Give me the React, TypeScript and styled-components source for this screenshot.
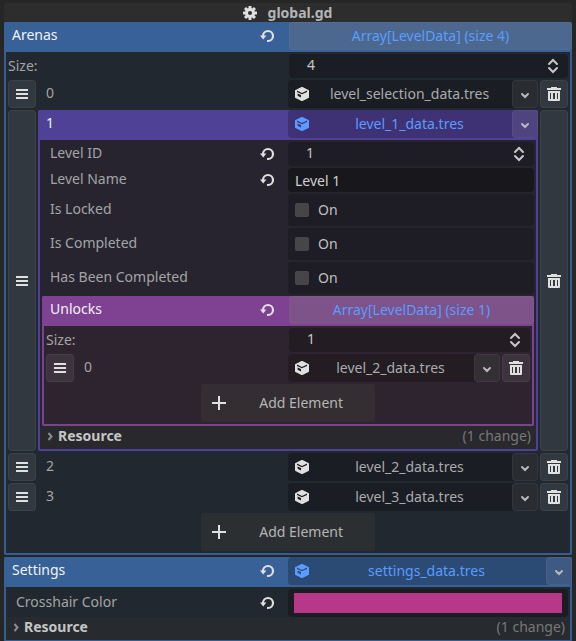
import React, { useState } from "react";
import styled, { createGlobalStyle } from "styled-components";

const GlobalStyle = createGlobalStyle`
  *, *::before, *::after { box-sizing: border-box; }
  body {
    margin: 0;
    background: #262626;
    color: #a2a4a6;
    font: 14px/20px "Noto Sans", sans-serif;
  }
  button, input { font: inherit; color: inherit; margin: 0; }
  button { border: 0; padding: 0; background: none; cursor: pointer; }
`;

const Inspector = styled.main`
  display: flex;
  flex-direction: column;
  padding: 3px 4px 0;
`;

const Title = styled.h1`
  display: flex;
  align-items: center;
  justify-content: center;
  gap: 10px;
  height: 19px;
  margin: 0;
  padding-right: 2px;
  border-radius: 3px 3px 0 0;
  background: #2d2d2d;
  color: #b4b5b6;
  font-size: 14px;
  line-height: 18px;
`;

const Section = styled.section<{ $edge: string; $fill: string }>`
  border: 2px solid ${(p) => p.$edge};
  border-top: 0;
  border-radius: 2px;
  background: ${(p) => p.$fill};
  min-width: 0;

  & + & { margin-top: 2px; }
`;

const SectionHeader = styled.header<{ $fill: string }>`
  display: grid;
  grid-template-columns: 1fr 1fr;
  height: 30px;
  margin: 0 -2px;
  padding-bottom: 2px;
  border-radius: 2px 2px 0 0;
  background: ${(p) => p.$fill};
  color: #f0f2f5;
`;

const Body = styled.div<{ $flush?: boolean }>`
  display: flex;
  flex-direction: column;
  gap: 2px;
  padding: 2px 2px ${(p) => (p.$flush ? 0 : 2)}px;
`;

const PropertyRow = styled.div<{ $height: number }>`
  display: grid;
  grid-template-columns: 1fr 1fr;
  height: ${(p) => p.$height}px;
`;

const LabelCell = styled.div<{ $plain?: boolean }>`
  display: flex;
  align-items: center;
  justify-content: space-between;
  min-width: 0;
  padding: ${(p) => (p.$plain ? "0" : "0 13px 2px 8px")};
  white-space: nowrap;
`;

const RevertButton = styled.button`
  display: flex;
  margin-top: 2px;
  color: #e0e0e0;
`;

const ArrayButton = styled.button`
  margin-left: 1px;
  border: 1px solid rgba(255, 255, 255, 0.03);
  border-radius: 4px;
  background: rgba(120, 120, 120, 0.32);
  color: #5a9cff;
`;

const Field = styled.div<{ $inset?: boolean; $fill: string }>`
  display: flex;
  align-items: center;
  min-width: 0;
  margin-left: ${(p) => (p.$inset ? 1 : 0)}px;
  border-radius: 4px;
  background: ${(p) => p.$fill};
  color: #c6c7c9;
`;

const NumberInput = styled.input`
  flex: 1;
  min-width: 0;
  height: 24px;
  padding: 0 0 4px 18px;
  border: 0;
  outline: 0;
  background: none;
  appearance: textfield;
  &::-webkit-inner-spin-button { display: none; }
`;

const Stepper = styled.button`
  display: flex;
  margin-right: 7px;
  color: #c6c7c9;
`;

const TextInput = styled.input`
  width: 100%;
  min-width: 0;
  height: 24px;
  padding: 0 7px;
  border: 0;
  border-radius: 4px;
  outline: 0;
  background: #18171c;
  color: #d0d0d2;
`;

const CheckLabel = styled.label`
  display: flex;
  align-items: center;
  gap: 9px;
  min-width: 0;
  padding-left: 7px;
  border-radius: 4px;
  background: #1e1c24;
  color: #c0c0c2;
`;

const CheckBox = styled.input`
  appearance: none;
  width: 14px;
  height: 14px;
  border-radius: 2px;
  background: #46454a;
  &:checked { background: #5a9cff; }
`;

const ResourceField = styled.div<{ $fill: string; $ink?: string }>`
  display: flex;
  min-width: 0;
  height: 28px;
  border-radius: 4px;
  background: ${(p) => p.$fill};
  color: ${(p) => p.$ink ?? "#e0e0e0"};
`;

const ResourceButton = styled.button`
  display: flex;
  flex: 1;
  align-items: center;
  min-width: 0;
  padding: 0 3px 0 6px;
`;

const ResourceName = styled.span<{ $ink?: string }>`
  flex: 1;
  overflow: hidden;
  color: ${(p) => p.$ink ?? "#a9abad"};
  text-align: center;
  text-overflow: ellipsis;
  white-space: nowrap;
`;

const Tile = styled.button<{ $fill: string; $width?: number }>`
  display: flex;
  flex: none;
  align-items: center;
  justify-content: center;
  width: ${(p) => p.$width ?? 28}px;
  border: 1px solid rgba(255, 255, 255, 0.05);
  border-radius: 4px;
  background: ${(p) => p.$fill};
  color: #e0e0e0;
`;

const ItemRow = styled.div`
  display: grid;
  grid-template-columns: 28px minmax(0, 1fr) 28px;
  gap: 2px;
  min-height: 28px;
`;

const ItemContent = styled.div`
  display: grid;
  grid-template-columns: 1fr 1fr;
  min-width: 0;
`;

const AddButton = styled.button<{ $fill: string }>`
  display: flex;
  align-items: center;
  align-self: center;
  justify-content: space-between;
  width: 174px;
  height: 38px;
  padding: 0 32px 0 10px;
  border-radius: 2px;
  background: ${(p) => p.$fill};
  color: #b4b5b6;
`;

const CategoryRow = styled.button<{ $fill: string }>`
  display: flex;
  align-items: center;
  width: 100%;
  height: 23px;
  padding: 0 5px 4px 6px;
  background: ${(p) => p.$fill};
  white-space: nowrap;
`;

const CategoryName = styled.strong`
  flex: 1;
  margin-left: 2px;
  color: #c4c5c6;
  text-align: left;
`;

const ChangeCount = styled.span`
  color: #77787a;
`;

const ColorButton = styled.button<{ $color: string }>`
  height: 28px;
  border: solid #1b1d23;
  border-width: 4px 6px;
  border-radius: 4px;
  background: ${(p) => p.$color};
`;

const Icon = styled.svg`
  display: block;
  flex: none;
`;

const GearIcon = () => (
  <Icon width="16" height="16" viewBox="0 0 16 16" aria-hidden="true">
    <g fill="#e0e0e0">
      {[0, 45, 90, 135].map((a) => (
        <rect key={a} x="6.5" y="1" width="3" height="14" rx="0.5" transform={`rotate(${a} 8 8)`} />
      ))}
      <circle cx="8" cy="8" r="5" />
    </g>
    <circle cx="8" cy="8" r="2" fill="#2d2d2d" />
  </Icon>
);

const RevertIcon = () => (
  <Icon width="16" height="16" viewBox="0 0 16 16" aria-hidden="true">
    <path
      d="M4 8.5V8a5 5 0 1 1 5 5H8"
      fill="none"
      stroke="currentColor"
      strokeWidth="2.2"
    />
    <path fill="currentColor" d="M1 7.6h6.4L4.2 11.4z" />
  </Icon>
);

const CubeIcon = () => (
  <Icon width="16" height="16" viewBox="0 0 16 16" aria-hidden="true">
    <path
      fill="currentColor"
      fillRule="evenodd"
      d="M7.5 1.1q.5-.2 1 0l6 2.8q.5.2.5.8v6.6q0 .5-.5.8l-6 2.8q-.5.2-1 0l-6-2.8q-.5-.3-.5-.8V4.7q0-.6.5-.8zM3 4.6v1.3l5 2.4 5-2.4V4.6L8 7zM3.6 7.4v2.4L7 11.6V9z"
    />
  </Icon>
);

const HandleIcon = () => (
  <Icon width="12" height="10" viewBox="0 0 12 10" aria-hidden="true">
    <path fill="currentColor" d="M0 0h12v2H0zM0 4h12v2H0zM0 8h12v2H0z" />
  </Icon>
);

const TrashIcon = () => (
  <Icon width="16" height="16" viewBox="0 0 16 16" aria-hidden="true">
    <path
      fill="currentColor"
      fillRule="evenodd"
      d="M5 1h6v1h4v2H1V2h4zM2 5h12v9a1 1 0 0 1-1 1H3a1 1 0 0 1-1-1zM4 7v6h1V7zM7 7v6h2V7zM11 7v6h1V7z"
    />
  </Icon>
);

const ChevronIcon = () => (
  <Icon width="12" height="12" viewBox="0 0 12 12" aria-hidden="true">
    <path d="M3 6l3 3 3-3" fill="none" stroke="#b8b9bb" strokeWidth="2" strokeLinecap="round" />
  </Icon>
);

const FoldIcon = () => (
  <Icon width="10" height="12" viewBox="0 0 10 12" aria-hidden="true">
    <path d="M2.5 3l3 3.5-3 3.5" fill="none" stroke="#8c8d8f" strokeWidth="2" />
  </Icon>
);

const StepperIcon = () => (
  <Icon width="16" height="16" viewBox="0 0 16 16" aria-hidden="true">
    <path
      d="M4 6l4-4 4 4M4 10l4 4 4-4"
      fill="none"
      stroke="currentColor"
      strokeWidth="2"
      strokeLinecap="round"
    />
  </Icon>
);

const PlusIcon = () => (
  <Icon width="16" height="16" viewBox="0 0 16 16" aria-hidden="true">
    <path fill="#e0e0e0" d="M7 1h2v6h6v2H9v6H7V9H1V7h6z" />
  </Icon>
);

const Revert = ({ name }: { name: string }) => (
  <RevertButton type="button" aria-label={`Revert ${name}`}>
    <RevertIcon />
  </RevertButton>
);

interface Theme {
  edge: string;
  header: string;
  body: string;
  tile: string;
  drop: string;
  field: string;
  add: string;
}

const blue: Theme = {
  edge: "#365e94",
  header: "#386198",
  body: "#22282f",
  tile: "#31383f",
  drop: "#292c31",
  field: "#1b1d24",
  add: "#2c2f32",
};
const violet: Theme = {
  edge: "#4f4098",
  header: "#4f4296",
  body: "#27242f",
  tile: "#31383f",
  drop: "#4f4480",
  field: "#1e1c24",
  add: "#2c2f32",
};
const magenta: Theme = {
  edge: "#7d4192",
  header: "#7f4192",
  body: "#2d242f",
  tile: "#3c333f",
  drop: "#342e35",
  field: "#231c23",
  add: "#342e32",
};

interface SpinProps {
  id: string;
  value: number;
  fill: string;
  inset?: boolean;
}

function Spin({ id, value: initial, fill, inset }: SpinProps) {
  const [value, setValue] = useState(initial);
  return (
    <Field $inset={inset} $fill={fill}>
      <NumberInput
        id={id}
        type="number"
        value={value}
        onChange={(e) => setValue(Number(e.target.value))}
      />
      <Stepper type="button" aria-label="Increase" onClick={() => setValue(value + 1)}>
        <StepperIcon />
      </Stepper>
    </Field>
  );
}

const SizeRow = ({ theme, id, size }: { theme: Theme; id: string; size: number }) => (
  <PropertyRow $height={24}>
    <LabelCell $plain>
      <label htmlFor={id}>Size:</label>
    </LabelCell>
    <Spin id={id} value={size} fill={theme.field} inset />
  </PropertyRow>
);

interface ResourceProps {
  name: string;
  fill: string;
  dropFill: string;
  ink?: string;
}

const Resource = ({ name, fill, dropFill, ink }: ResourceProps) => (
  <ResourceField $fill={fill} $ink={ink}>
    <ResourceButton type="button">
      <CubeIcon />
      <ResourceName $ink={ink}>{name}</ResourceName>
    </ResourceButton>
    <Tile type="button" $fill={dropFill} $width={26} aria-label={`Options for ${name}`}>
      <ChevronIcon />
    </Tile>
  </ResourceField>
);

interface ItemProps {
  theme: Theme;
  index: number;
  children: React.ReactNode;
}

const Item = ({ theme, index, children }: ItemProps) => (
  <ItemRow>
    <Tile type="button" $fill={theme.tile} aria-label={`Move element ${index}`}>
      <HandleIcon />
    </Tile>
    {children}
    <Tile type="button" $fill={theme.tile} aria-label={`Remove element ${index}`}>
      <TrashIcon />
    </Tile>
  </ItemRow>
);

const ResourceItem = ({ theme, index, name }: { theme: Theme; index: number; name: string }) => (
  <Item theme={theme} index={index}>
    <ItemContent>
      <LabelCell>{index}</LabelCell>
      <Resource name={name} fill={theme.field} dropFill={theme.drop} />
    </ItemContent>
  </Item>
);

const Add = ({ theme }: { theme: Theme }) => (
  <AddButton type="button" $fill={theme.add}>
    <PlusIcon />
    Add Element
  </AddButton>
);

const Category = ({ fill }: { fill: string }) => (
  <CategoryRow type="button" $fill={fill}>
    <FoldIcon />
    <CategoryName>Resource</CategoryName>
    <ChangeCount>(1 change)</ChangeCount>
  </CategoryRow>
);

const CheckRow = ({ name }: { name: string }) => (
  <PropertyRow $height={32}>
    <LabelCell>{name}</LabelCell>
    <CheckLabel>
      <CheckBox type="checkbox" aria-label={name} />
      On
    </CheckLabel>
  </PropertyRow>
);

const LevelPanel = () => (
  <Section $edge={violet.edge} $fill={violet.body}>
    <SectionHeader $fill={violet.header}>
      <LabelCell>1</LabelCell>
      <Resource name="level_1_data.tres" fill="#3e3274" dropFill={violet.drop} ink="#5a9cff" />
    </SectionHeader>
    <Body $flush>
      <PropertyRow $height={24}>
        <LabelCell>
          <label htmlFor="level-id">Level ID</label>
          <Revert name="Level ID" />
        </LabelCell>
        <Spin id="level-id" value={1} fill={violet.field} />
      </PropertyRow>
      <PropertyRow $height={24}>
        <LabelCell>
          <label htmlFor="level-name">Level Name</label>
          <Revert name="Level Name" />
        </LabelCell>
        <TextInput id="level-name" defaultValue="Level 1" />
      </PropertyRow>
      <CheckRow name="Is Locked" />
      <CheckRow name="Is Completed" />
      <CheckRow name="Has Been Completed" />
      <Section $edge={magenta.edge} $fill={magenta.body}>
        <SectionHeader $fill={magenta.header}>
          <LabelCell>
            Unlocks
            <Revert name="Unlocks" />
          </LabelCell>
          <ArrayButton type="button">Array[LevelData] (size 1)</ArrayButton>
        </SectionHeader>
        <Body>
          <SizeRow theme={magenta} id="unlocks-size" size={1} />
          <ResourceItem theme={magenta} index={0} name="level_2_data.tres" />
          <Add theme={magenta} />
        </Body>
      </Section>
    </Body>
    <Category fill="#29282d" />
  </Section>
);

export default function App() {
  return (
    <>
      <GlobalStyle />
      <Inspector>
        <Title>
          <GearIcon />
          global.gd
        </Title>
        <Section $edge={blue.edge} $fill={blue.body}>
          <SectionHeader $fill={blue.header}>
            <LabelCell>
              Arenas
              <Revert name="Arenas" />
            </LabelCell>
            <ArrayButton type="button">Array[LevelData] (size 4)</ArrayButton>
          </SectionHeader>
          <Body>
            <SizeRow theme={blue} id="arenas-size" size={4} />
            <ResourceItem theme={blue} index={0} name="level_selection_data.tres" />
            <Item theme={blue} index={1}>
              <LevelPanel />
            </Item>
            <ResourceItem theme={blue} index={2} name="level_2_data.tres" />
            <ResourceItem theme={blue} index={3} name="level_3_data.tres" />
            <Add theme={blue} />
          </Body>
        </Section>
        <Section $edge={blue.edge} $fill={blue.body}>
          <SectionHeader $fill={blue.header}>
            <LabelCell>
              Settings
              <Revert name="Settings" />
            </LabelCell>
            <Resource name="settings_data.tres" fill="#2b4b75" dropFill="#3f5a82" ink="#5a9cff" />
          </SectionHeader>
          <Body $flush>
            <PropertyRow $height={28}>
              <LabelCell>
                Crosshair Color
                <Revert name="Crosshair Color" />
              </LabelCell>
              <ColorButton type="button" $color="#b73788" aria-label="Crosshair Color" />
            </PropertyRow>
          </Body>
          <Category fill="#272a2e" />
        </Section>
      </Inspector>
    </>
  );
}
